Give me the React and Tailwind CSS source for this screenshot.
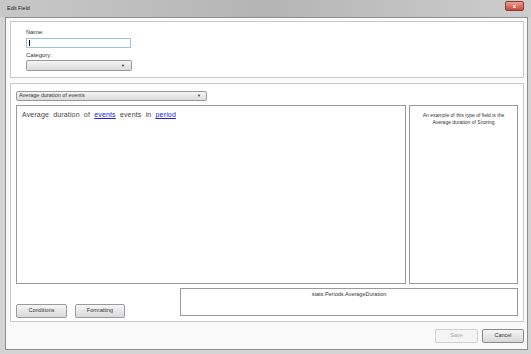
export default function App() {
    const font = { fontFamily: '"Liberation Sans", Arial, sans-serif' };

    return (
        <div className="w-[531px] h-[354px] bg-[#d4d4d4] flex flex-col text-[6px] text-[#333]" style={font}>
            {/* title bar */}
            <div className="h-[17px] flex items-center justify-between pl-[7px] pr-[7px] bg-gradient-to-r from-[#c8c8c8] via-[#b4b4b4] to-[#cdcdcd]">
                <span className="text-[5.5px] text-[#222] leading-none">Edit Field</span>
                <div className="w-[19px] h-[10px] mb-[5px] rounded-[2px] bg-gradient-to-b from-[#e8a090] to-[#c9463a] border border-[#8a3a32] flex items-center justify-center">
                    <span className="text-[6px] text-white leading-none font-bold">x</span>
                </div>
            </div>

            <div className="flex-1 flex pl-[5px] pr-[3px] pb-[4px]">
                <div className="flex-1 bg-[#fafafa] border border-[#8f8f8f] flex flex-col pl-[4px] pr-[3px] pt-[3px]">
                    {/* name / category */}
                    <div className="h-[57px] border border-[#c9c9c9] bg-white pl-[15px] pt-[7px] flex flex-col items-start">
                        <span className="leading-none">Name:</span>
                        <div className="mt-[3px] w-[105px] h-[10px] border border-[#9ec2d6] bg-white flex items-center pl-[2px]">
                            <div className="w-px h-[6px] bg-black" />
                        </div>
                        <span className="leading-none mt-[4px]">Category:</span>
                        <div className="mt-[2px] w-[106px] h-[11px] border border-[#9a9a9a] rounded-[2px] bg-gradient-to-b from-[#f4f4f4] to-[#dcdcdc] flex items-center justify-end pr-[6px]">
                            <span className="text-[4px] leading-none">▼</span>
                        </div>
                    </div>

                    {/* main panel */}
                    <div className="mt-[5px] h-[239px] border border-[#c9c9c9] bg-white px-[5px] pt-[7px] flex flex-col">
                        <div className="w-[191px] h-[10px] border border-[#9a9a9a] rounded-[2px] bg-gradient-to-b from-[#f4f4f4] to-[#dcdcdc] flex items-center justify-between pl-[2px] pr-[5px]">
                            <span className="text-[5.5px] leading-none">Average duration of events</span>
                            <span className="text-[4px] leading-none">▼</span>
                        </div>
                        <div className="mt-[4px] h-[179px] flex gap-[3px]">
                            <div className="w-[390px] border border-[#9a9a9a] pl-[5px] pt-[5px]">
                                <span className="text-[7px] leading-none text-[#444] tracking-[0.15px]">
                                    Average&nbsp; duration&nbsp; of&nbsp; <span className="text-[#2020d0] underline">events</span>&nbsp; events&nbsp; in&nbsp; <span className="text-[#2020d0] underline">period</span>
                                </span>
                            </div>
                            <div className="flex-1 border border-[#9a9a9a] pt-[6px] text-center text-[5px] leading-[7px] text-[#333]">
                                An example of this type of field is the<br />Average duration of Snoring
                            </div>
                        </div>
                        <div className="mt-[4px] flex items-end justify-between">
                            <div className="flex gap-[8px] mb-[3px]">
                                <button className="w-[51px] h-[14px] border border-[#9a9a9a] rounded-[2px] bg-gradient-to-b from-[#f6f6f6] to-[#d8d8d8] text-[5.5px] text-[#333] leading-none">Conditions</button>
                                <button className="w-[50px] h-[14px] border border-[#9a9a9a] rounded-[2px] bg-gradient-to-b from-[#f6f6f6] to-[#d8d8d8] text-[5.5px] text-[#333] leading-none">Formatting</button>
                            </div>
                            <div className="w-[338px] h-[28px] mb-[5px] border border-[#9a9a9a] text-center pt-[3px] text-[5.5px] leading-none text-[#333]">
                                stats.Periods.AverageDuration
                            </div>
                        </div>
                    </div>

                    {/* footer */}
                    <div className="flex-1 flex items-start justify-end gap-[4px] pt-[7px]">
                        <button className="w-[43px] h-[14px] border border-[#cfcfcf] rounded-[2px] bg-[#f4f4f4] text-[5.5px] text-[#a8a8a8] leading-none">Save</button>
                        <button className="w-[42px] h-[14px] border border-[#8a8a8a] rounded-[2px] bg-gradient-to-b from-[#f6f6f6] to-[#d8d8d8] text-[5.5px] text-[#333] leading-none">Cancel</button>
                    </div>
                </div>
            </div>
        </div>
    );
}
